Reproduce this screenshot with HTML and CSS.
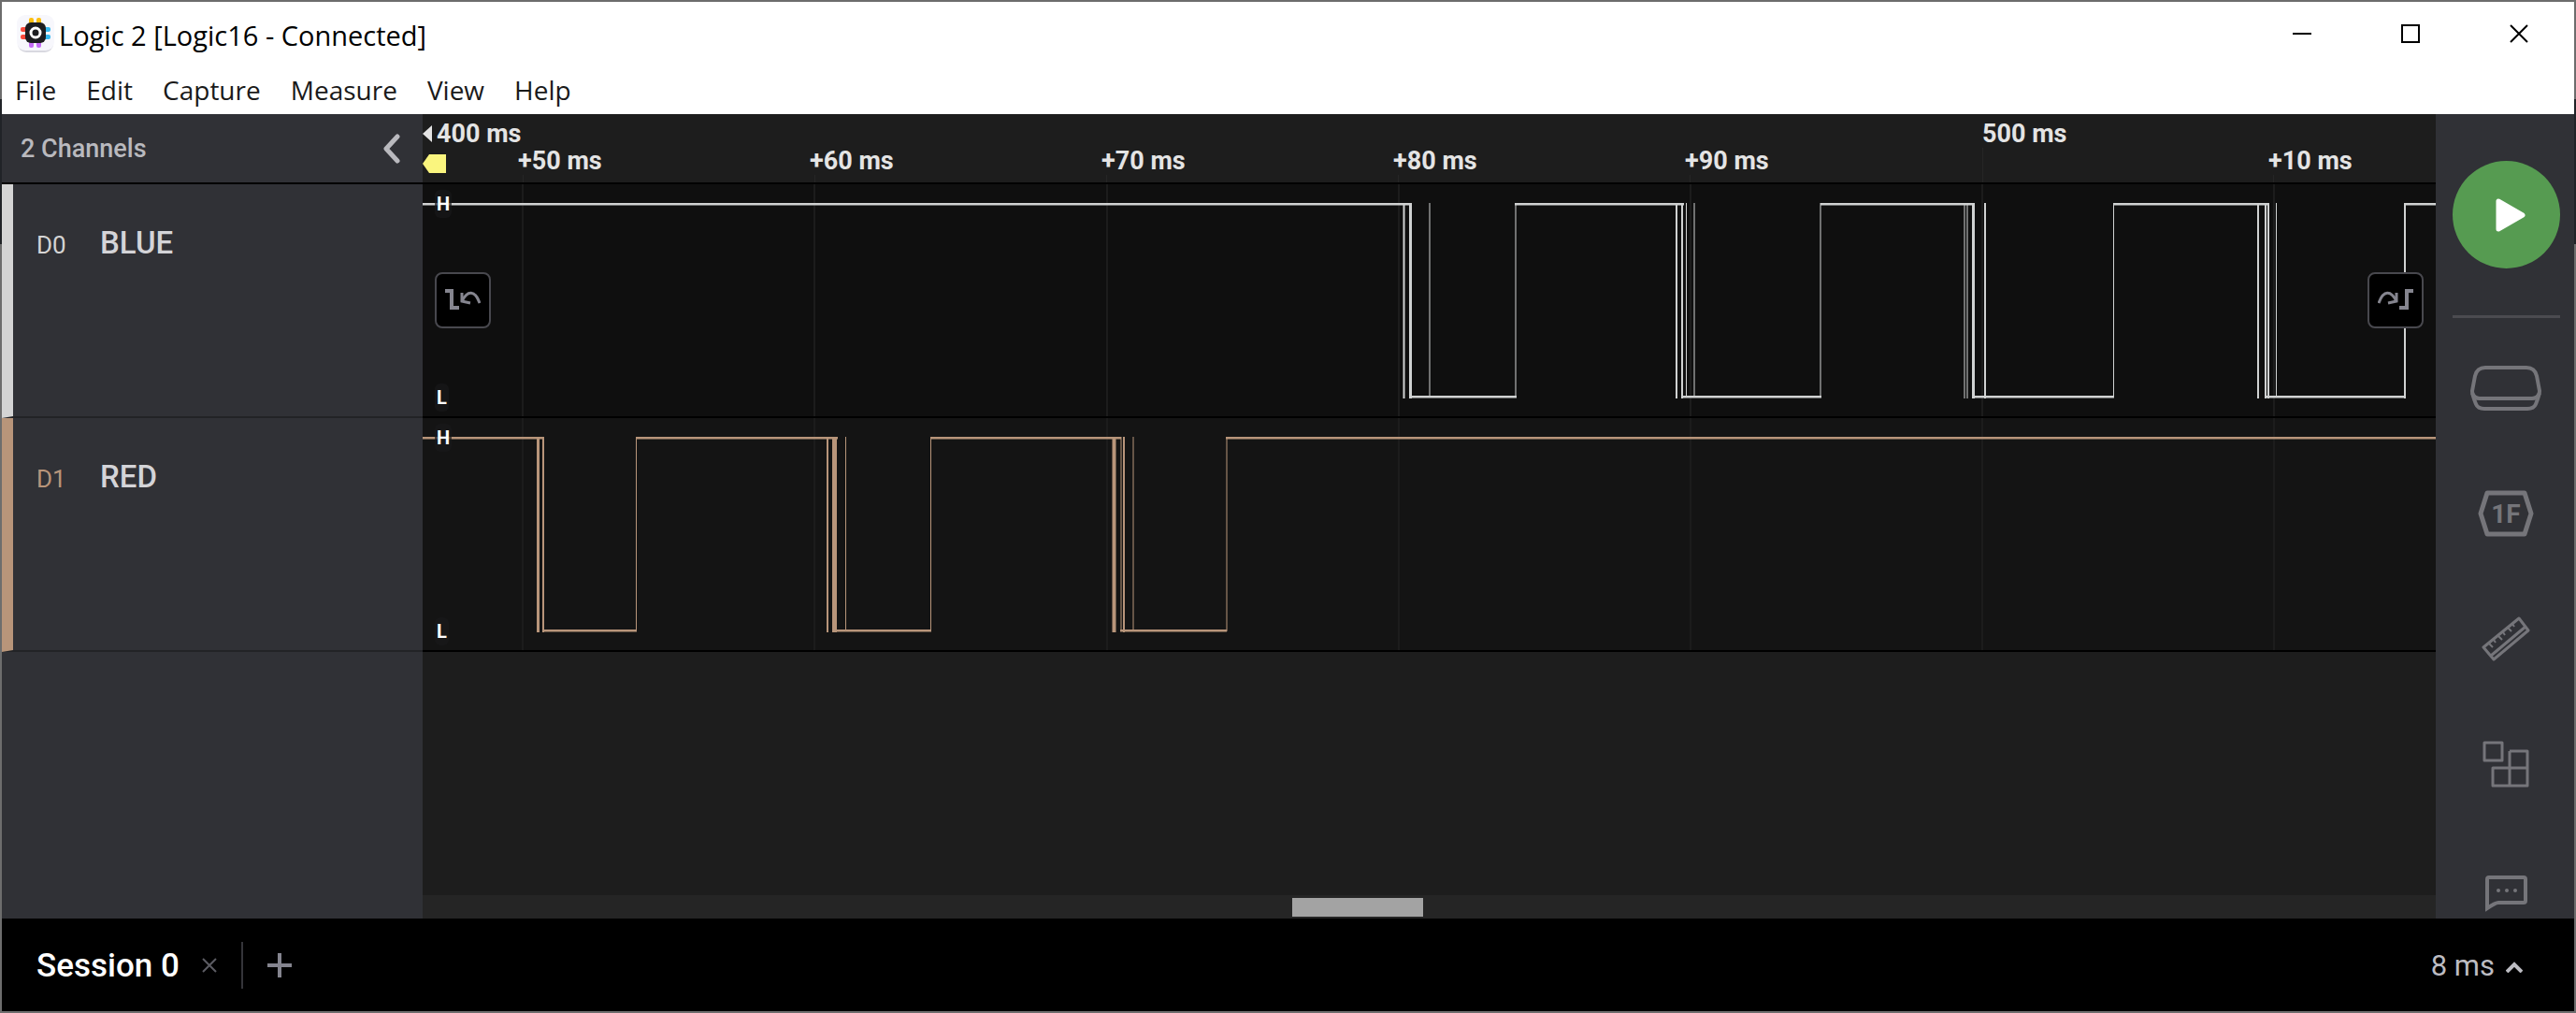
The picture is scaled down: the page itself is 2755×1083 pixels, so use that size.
FILE: index.html
```html
<!DOCTYPE html>
<html lang="en">
<head>
<meta charset="utf-8">
<title>Logic 2 [Logic16 - Connected]</title>
<link rel="stylesheet" href="styles.css">
</head>
<body>
<div class="window">
  <header class="titlebar">
    <svg class="app-icon" width="40" height="40" viewBox="0 0 40 40" aria-hidden="true">
      <rect x="1" y="2" width="38" height="38" rx="9" fill="#d9d9e0"/>
      <rect x="0" y="0" width="40" height="38" rx="9" fill="#f7f7fc"/>
      <g fill="#fdbf0f"><rect x="13" y="3" width="5" height="9" rx="2"/><rect x="21" y="3" width="5" height="9" rx="2"/></g>
      <g fill="#c56cf5"><rect x="13" y="26" width="5" height="9" rx="2"/><rect x="21" y="26" width="5" height="9" rx="2"/></g>
      <g fill="#fb4a3b"><rect x="4" y="13" width="9" height="5" rx="2"/><rect x="4" y="21" width="9" height="5" rx="2"/></g>
      <g fill="#35b8ee"><rect x="27" y="13" width="9" height="5" rx="2"/><rect x="27" y="21" width="9" height="5" rx="2"/></g>
      <rect x="9" y="8" width="22" height="22" rx="6" fill="#1c1d20"/>
      <circle cx="20" cy="19" r="5" fill="#1c1d20" stroke="#fff" stroke-width="3"/>
    </svg>
    <h1 class="title">Logic 2 [Logic16 - Connected]</h1>
    <div class="caption-buttons">
      <button class="caption" type="button" aria-label="Minimize"><svg width="20" height="20"><path d="M0 10H20" stroke="#000" stroke-width="2"/></svg></button>
      <button class="caption" type="button" aria-label="Maximize"><svg width="20" height="20"><rect x="1" y="1" width="18" height="18" fill="none" stroke="#000" stroke-width="2"/></svg></button>
      <button class="caption" type="button" aria-label="Close"><svg width="20" height="20"><path d="M1 1L19 19M19 1L1 19" stroke="#000" stroke-width="2"/></svg></button>
    </div>
  </header>
  <nav class="menubar">
    <button type="button">File</button>
    <button type="button">Edit</button>
    <button type="button">Capture</button>
    <button type="button">Measure</button>
    <button type="button">View</button>
    <button type="button">Help</button>
  </nav>

  <main class="workspace">
    <aside class="channels">
      <div class="channels-head">
        <span>2 Channels</span>
        <button type="button" aria-label="Collapse channels"><svg width="18" height="32" viewBox="0 0 18 32"><path d="M15 3L3 16L15 29" fill="none" stroke="#b9b9be" stroke-width="5" stroke-linecap="round" stroke-linejoin="round"/></svg></button>
      </div>
      <div class="channel channel-d0"><span class="channel-id">D0</span><span class="channel-name">BLUE</span></div>
      <div class="channel channel-d1"><span class="channel-id">D1</span><span class="channel-name">RED</span></div>
    </aside>

    <section class="graph" aria-label="Timeline">
      <div class="ruler">
        <div class="ruler-major">
          <span class="major-first"><svg width="10" height="18" viewBox="0 0 10 18" aria-hidden="true"><path d="M10 0V18L0 9Z" fill="#e4e4e4"/></svg>400 ms</span>
          <span class="major-tick">500 ms</span>
        </div>
        <div class="ruler-minor">
          <span class="marker"><svg width="25" height="20" viewBox="0 0 25 20" aria-hidden="true"><path d="M7 0H25V20H7L0 10Z" fill="#faf57e"/></svg></span>
          <span class="tick">+50 ms</span>
          <span class="tick">+60 ms</span>
          <span class="tick">+70 ms</span>
          <span class="tick">+80 ms</span>
          <span class="tick">+90 ms</span>
          <span class="tick tick-blank"></span>
          <span class="tick">+10 ms</span>
        </div>
      </div>

      <div class="lane lane-d0">
        <svg class="wave" aria-hidden="true">
          <path class="grid" d="M107 0V248M419 0V248M732 0V248M1044 0V248M1356 0V248M1668 0V248M1980 0V248"/>
          <g id="levels-d0" class="level">
            <path d="M0 21H1058M1168 21H1349M1495 21H1660M1808 21H1973M1055 227H1170M1347 227H1496M1657 227H1809M1970 227H2121"/>
            <line x1="2119" y1="21" x2="100%" y2="21"/>
          </g>
          <use class="soft" href="#levels-d0" y="1"/>
          <path class="edge" d="M1049.500 20V229M1341 20V229M1347 20V229M1671 20V229M1963 20V229M1971 20V229M1974 20V229M2120 20V229"/>
          <path class="edge wide" d="M1056.500 20V229M1658.500 20V229"/>
          <path class="edge thin" d="M1351.500 20V228M1808.500 20V228M1982.500 20V228"/>
          <path class="edge faint" d="M1077 20V228M1169 20V228M1360 20V228M1495 20V228M1649 20V229M1652 20V229"/>
        </svg>
        <span class="hl hl-high">H</span>
        <span class="hl hl-low">L</span>
        <button class="jump jump-prev" type="button" aria-label="Previous edge"><svg width="38" height="24" viewBox="0 0 38 24"><path d="M0 2H7V20H15" fill="none" stroke="#85858f" stroke-width="4"/><path d="M37 15C32 1 24 1 18 13" fill="none" stroke="#85858f" stroke-width="3"/><path d="M18 4V13L27 15" fill="none" stroke="#85858f" stroke-width="3"/></svg></button>
        <button class="jump jump-next" type="button" aria-label="Next edge"><svg width="38" height="24" viewBox="0 0 38 24"><path d="M38 2H31V20H23" fill="none" stroke="#85858f" stroke-width="4"/><path d="M1 15C6 1 14 1 20 13" fill="none" stroke="#85858f" stroke-width="3"/><path d="M20 4V13L11 15" fill="none" stroke="#85858f" stroke-width="3"/></svg></button>
      </div>

      <div class="lane lane-d1">
        <svg class="wave" aria-hidden="true">
          <path class="grid" d="M107 0V248M419 0V248M732 0V248M1044 0V248M1356 0V248M1668 0V248M1980 0V248"/>
          <g id="levels-d1" class="level">
            <path d="M0 21H130M228 21H444M543 21H747M128 227H229M438 227H544M746 227H860"/>
            <line x1="859" y1="21" x2="100%" y2="21"/>
          </g>
          <use class="soft" href="#levels-d1" y="1"/>
          <path class="edge" d="M129 20V229M433 20V229M750 20V229"/>
          <path class="edge wide" d="M123.500 20V229M739.500 20V229"/>
          <path class="edge block" d="M440.500 20V229"/>
          <path class="edge thin" d="M228.500 20V228M452.500 20V228M543.500 20V228"/>
          <path class="edge faint" d="M738 20V229M741 20V229M747 20V228M760 20V228M860 20V228"/>
        </svg>
        <span class="hl hl-high">H</span>
        <span class="hl hl-low">L</span>
      </div>

      <div class="empty"></div>
      <div class="scrollbar"><div class="thumb"></div></div>
    </section>

    <aside class="tools">
      <button class="play" type="button" aria-label="Start capture"><svg width="32" height="36" viewBox="0 0 32 36"><path d="M3 3V33L29 18Z" fill="#fff" stroke="#fff" stroke-width="5" stroke-linejoin="round"/></svg></button>
      <hr class="rule">
      <button class="tool" type="button" aria-label="Device"><svg width="76" height="50" viewBox="0 0 76 50" fill="none" stroke="#75757a" stroke-width="4"><path d="M16 3H60Q69 3 71 12L74 28Q74 32 70 42Q68 47 61 47H15Q8 47 6 42Q2 32 2 28L5 12Q7 3 16 3Z"/><path d="M2 30Q4 36 10 36H66Q72 36 74 30"/></svg></button>
      <button class="tool" type="button" aria-label="Analyzers"><svg width="60" height="50" viewBox="0 0 60 50"><path d="M10 3H50L57 25L50 47H10L3 25Z" fill="none" stroke="#75757a" stroke-width="5" stroke-linejoin="round"/><text class="hex" x="30" y="35" text-anchor="middle">1F</text></svg></button>
      <button class="tool" type="button" aria-label="Measurements"><svg width="52" height="48" viewBox="0 0 52 48" fill="none" stroke="#75757a" stroke-width="3" stroke-linejoin="round"><path d="M40 2L50 15L13 46L2 33Z"/><path d="M47 11L10 42"/><path stroke-width="2" d="M8 29L12 33M13 25L15 28M18 21L22 25M23 17L25 20M28 12L32 16M33 8L35 11"/></svg></button>
      <button class="tool" type="button" aria-label="Extensions"><svg width="50" height="50" viewBox="0 0 50 50" fill="none" stroke="#75757a" stroke-width="3" stroke-linejoin="round"><path d="M2 2H21V21H2ZM29 11H48V48H11V29H48M29 11V48"/></svg></button>
      <button class="tool tool-chat" type="button" aria-label="Feedback"><svg width="46" height="40" viewBox="0 0 46 40"><path d="M2 35V4Q2 2 4 2H41Q43 2 43 4V27Q43 29 41 29H14Q11 29 2 35Z" fill="none" stroke="#75757a" stroke-width="4"/><g fill="#75757a"><circle cx="14" cy="16" r="2"/><circle cx="23" cy="16" r="2"/><circle cx="32" cy="16" r="2"/></g></svg></button>
    </aside>
  </main>

  <footer class="sessions">
    <button class="session" type="button">Session 0</button>
    <button class="icon-button" type="button" aria-label="Close session"><svg width="16" height="16" viewBox="0 0 16 16"><path d="M1 1L15 15M15 1L1 15" stroke="#5c5c63" stroke-width="2"/></svg></button>
    <span class="divider"></span>
    <button class="icon-button" type="button" aria-label="New session"><svg width="26" height="26" viewBox="0 0 26 26"><path d="M0 13H26M13 0V26" stroke="#85858f" stroke-width="4"/></svg></button>
    <button class="duration" type="button">8 ms<svg width="18" height="12" viewBox="0 0 18 12" aria-hidden="true"><path d="M1 11L9 3L17 11" fill="none" stroke="#bcbcc2" stroke-width="4"/></svg></button>
  </footer>
</div>
</body>
</html>
```
FILE: styles.css
```css
* { box-sizing: border-box; }

body {
  margin: 0;
  background: linear-gradient(#6d6d6d 106px, #202327 106px, #202327 261px, #6d6d6d 261px);
  font-family: Roboto, "Liberation Sans", sans-serif;
}

button {
  margin: 0;
  padding: 0;
  border: 0;
  background: none;
  color: inherit;
  font: inherit;
}

svg { display: block; flex: none; }

.window {
  display: flex;
  flex-direction: column;
  height: 100vh;
  border: 2px solid transparent;
  background: #303136 padding-box;
}

.titlebar {
  display: flex;
  align-items: center;
  height: 68px;
  padding-left: 16px;
  background: #fff;
}

.title {
  flex: 1;
  margin: 0 0 0 5px;
  padding-top: 3px;
  color: #000;
  font: 400 29px/40px "Open Sans", "Noto Sans", sans-serif;
}

.caption-buttons {
  display: flex;
  padding-right: 1px;
}

.caption {
  display: grid;
  place-items: center;
  width: 116px;
  height: 68px;
}

.menubar {
  display: flex;
  gap: 32px;
  height: 52px;
  padding: 6px 14px 0;
  background: #fff;
  color: #1a1a1a;
  font: 400 28px/40px "Open Sans", "Noto Sans", sans-serif;
}

.menubar button { height: 40px; }

.workspace {
  display: flex;
  flex: 1;
  min-height: 0;
}

.channels {
  width: 450px;
  flex: none;
  background: #303136;
}

.channels-head {
  display: flex;
  align-items: center;
  justify-content: space-between;
  height: 75px;
  padding: 0 24px 0 20px;
  border-bottom: 2px solid #000;
  color: #b9b9be;
  font-size: 27px;
  font-weight: 500;
}

.channel {
  display: flex;
  align-items: baseline;
  height: 250px;
  padding: 43px 0 0 25px;
  border-bottom: 2px solid #222326;
  border-left: 12px solid;
}

.channel-d0 { border-left-color: #d4d4d4; }
.channel-d1 { border-left-color: #b8957a; }
.channel-d0 .channel-id { color: #d4d4d4; }
.channel-d1 .channel-id { color: #b8957a; }

.channel-id {
  width: 68px;
  font-size: 26px;
}

.channel-name {
  color: #d4d4d8;
  font-size: 33px;
  line-height: 40px;
  font-weight: 500;
}

.graph {
  display: flex;
  flex: 1;
  flex-direction: column;
  min-width: 0;
  overflow: hidden;
  background: #1d1d1d;
}

.ruler {
  height: 75px;
  padding-top: 6px;
  border-bottom: 2px solid #000;
  color: #e4e4e4;
  font-size: 27px;
  line-height: 30px;
  font-weight: 700;
  white-space: nowrap;
}

.ruler-major,
.ruler-minor { display: flex; }
.ruler-major { height: 29px; }

.major-first {
  display: flex;
  align-items: center;
  flex: none;
  gap: 5px;
  width: 1668px;
}

.marker {
  flex: none;
  width: 102px;
  padding-top: 8px;
}

.tick {
  flex: none;
  width: 312px;
  height: 38px;
  background: linear-gradient(#262626, #262626) 5px 30px / 1px 8px no-repeat;
}

.major-tick {
  height: 67px;
  background: linear-gradient(#262626, #262626) 0 30px / 1px 37px no-repeat;
}

.tick-blank { background: none; }

.lane {
  position: relative;
  height: 250px;
  flex: none;
  border-bottom: 2px solid #000;
}

.lane-d0 { background: #0f0f0f; color: #d0d2d2; }
.lane-d1 { background: #141414; color: #b8957a; }

.wave {
  width: 100%;
  height: 248px;
}

.grid { stroke: #1c1c1c; stroke-width: 2; }
.level { stroke: currentColor; stroke-width: 2; }
.soft { opacity: 0.5; }
.edge { stroke: currentColor; stroke-width: 2; }
.wide { stroke-width: 3; }
.block { stroke-width: 5; }
.thin { stroke-width: 1; }
.faint { opacity: 0.5; }

.hl {
  position: absolute;
  left: 13px;
  padding: 0 2px;
  border-radius: 6px;
  background: rgb(24 24 26 / 70%);
  color: #fff;
  font-size: 20px;
  line-height: 30px;
  font-weight: 700;
}

.hl-high { top: 6px; }
.hl-low { bottom: 5px; }

.jump {
  position: absolute;
  top: 94px;
  display: grid;
  place-items: center;
  width: 60px;
  height: 60px;
  border: 2px solid #48484e;
  border-radius: 8px;
  background: #000;
}

.jump-prev { left: 13px; }
.jump-next { right: 13px; }

.empty { flex: 1; }

.scrollbar {
  height: 25px;
  padding: 3px 0 2px;
  background: #252525;
}

.thumb {
  width: 140px;
  height: 20px;
  margin-left: 43.2%;
  background: #a3a3a3;
}

.tools {
  display: flex;
  flex: none;
  flex-direction: column;
  align-items: center;
  width: 148px;
  padding: 50px 16px 0 18px;
  overflow: hidden;
  background: #303136;
}

.play {
  display: grid;
  flex: none;
  place-items: center;
  width: 115px;
  height: 115px;
  padding-left: 10px;
  border-radius: 50%;
  background: #569b51;
}

.rule {
  flex: none;
  width: 115px;
  height: 3px;
  margin: 50px 0 8px;
  border: 0;
  background: #4b4b50;
}

.tool {
  display: grid;
  flex: none;
  place-items: center;
  width: 100%;
  height: 134px;
}

.tool-chat { padding: 10px 0 0 2px; }

.hex {
  fill: #75757a;
  font-size: 28px;
  font-weight: 700;
}

.sessions {
  display: flex;
  align-items: center;
  height: 99px;
  padding: 1px 55px 0 37px;
  background: #000;
}

.session {
  color: #fff;
  font-size: 35px;
  font-weight: 500;
}

.icon-button { padding: 0 24px; }

.divider {
  width: 2px;
  height: 50px;
  margin: 0 2px;
  background: #35353a;
}

.duration {
  display: flex;
  align-items: center;
  gap: 12px;
  color: #bcbcc2;
  margin-left: auto;
  font-size: 31px;
}

.duration svg { margin-top: 4px; }
```
